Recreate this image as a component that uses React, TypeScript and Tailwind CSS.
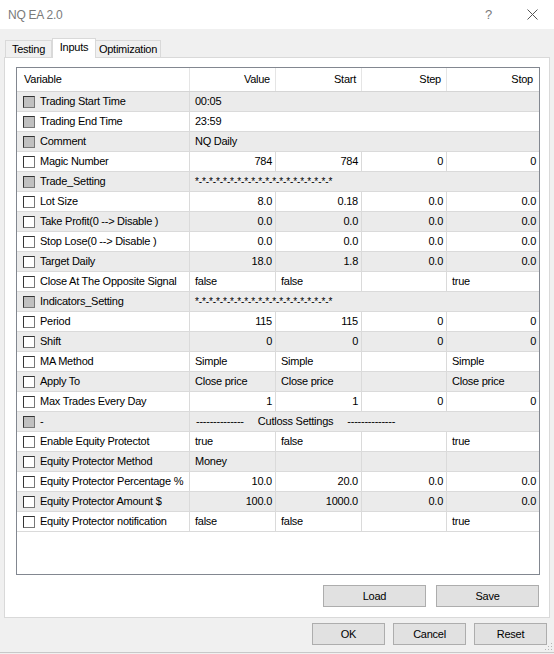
import React from 'react';

type Row = {
  name: string;
  cb: 'gray' | 'white';
  span?: string;
  center?: boolean;
  cells?: string[];
  num?: boolean;
};

const stars = '*-*-*-*-*-*-*-*-*-*-*-*-*-*-*-*-*-*-*-*';

const rows: Row[] = [
  { name: 'Trading Start Time', cb: 'gray', span: '00:05' },
  { name: 'Trading End Time', cb: 'gray', span: '23:59' },
  { name: 'Comment', cb: 'gray', span: 'NQ Daily' },
  { name: 'Magic Number', cb: 'white', cells: ['784', '784', '0', '0'], num: true },
  { name: 'Trade_Setting', cb: 'gray', span: stars },
  { name: 'Lot Size', cb: 'white', cells: ['8.0', '0.18', '0.0', '0.0'], num: true },
  { name: 'Take Profit(0 --> Disable )', cb: 'white', cells: ['0.0', '0.0', '0.0', '0.0'], num: true },
  { name: 'Stop Lose(0 --> Disable )', cb: 'white', cells: ['0.0', '0.0', '0.0', '0.0'], num: true },
  { name: 'Target Daily', cb: 'white', cells: ['18.0', '1.8', '0.0', '0.0'], num: true },
  { name: 'Close At The Opposite Signal', cb: 'white', cells: ['false', 'false', '', 'true'] },
  { name: 'Indicators_Setting', cb: 'gray', span: stars },
  { name: 'Period', cb: 'white', cells: ['115', '115', '0', '0'], num: true },
  { name: 'Shift', cb: 'white', cells: ['0', '0', '0', '0'], num: true },
  { name: 'MA Method', cb: 'white', cells: ['Simple', 'Simple', '', 'Simple'] },
  { name: 'Apply To', cb: 'white', cells: ['Close price', 'Close price', '', 'Close price'] },
  { name: 'Max Trades Every Day', cb: 'white', cells: ['1', '1', '0', '0'], num: true },
  { name: '-', cb: 'gray', span: '--------------     Cutloss Settings     --------------', center: true },
  { name: 'Enable Equity Protectot', cb: 'white', cells: ['true', 'false', '', 'true'] },
  { name: 'Equity Protector Method', cb: 'white', cells: ['Money', '', '', ''] },
  { name: 'Equity Protector Percentage %', cb: 'white', cells: ['10.0', '20.0', '0.0', '0.0'], num: true },
  { name: 'Equity Protector Amount $', cb: 'white', cells: ['100.0', '1000.0', '0.0', '0.0'], num: true },
  { name: 'Equity Protector notification', cb: 'white', cells: ['false', 'false', '', 'true'] },
];

const Check = ({ gray }: { gray: boolean }) => (
  <span
    className={`shrink-0 inline-block w-[12px] h-[12px] border border-t-[#333] border-l-[#333] border-r-[#777] border-b-[#777] ${
      gray ? 'bg-[#c0c0c0]' : 'bg-white'
    }`}
  />
);

const Btn = ({ label, w }: { label: string; w: string }) => (
  <div className={`${w} h-[22px] flex items-center justify-center bg-[#e1e1e1] border border-[#adadad] text-black`}>
    {label}
  </div>
);

export default function App() {
  return (
    <div
      className="w-[554px] h-[654px] bg-[#f0f0f0] text-[11px] tracking-[-0.25px] text-black flex flex-col overflow-hidden relative"
      style={{ fontFamily: '"Liberation Sans", Arial, sans-serif' }}
    >
      {/* title bar */}
      <div className="h-[29px] bg-white flex items-center justify-between pl-[8px] pr-[16px] shrink-0">
        <span className="text-[#7a7a7a] text-[12px]">NQ EA 2.0</span>
        <div className="flex items-center gap-[35px]">
          <span className="text-[#7a7a7a] text-[13px]">?</span>
          <svg width="11" height="11" viewBox="0 0 11 11">
            <path d="M0.5 0.5 L10.5 10.5 M10.5 0.5 L0.5 10.5" stroke="#555" strokeWidth="1" fill="none" />
          </svg>
        </div>
      </div>

      {/* tabs */}
      <div className="flex items-end pl-[5px] pt-[8px] h-[28px] shrink-0 relative z-10">
        <div className="h-[17px] w-[47px] flex items-center justify-center border border-b-0 border-[#d9d9d9] bg-[#f0f0f0]">Testing</div>
        <div className="h-[20px] w-[44px] pb-[3px] flex items-center justify-center border border-b-0 border-[#d9d9d9] bg-white -mb-px">Inputs</div>
        <div className="h-[17px] w-[65px] flex items-center justify-center border border-b-0 border-l-0 border-[#d9d9d9] bg-[#f0f0f0]">Optimization</div>
      </div>

      {/* panel */}
      <div className="mx-[4px] w-[546px] h-[561px] bg-white border border-[#d9d9d9] pt-[9px] pl-[11px] flex flex-col">
        <div className="w-[524px] h-[508px] border border-[#828790] bg-white">
          <div className="grid grid-cols-[173px_86px_86px_85px_92px] h-[24px] border-b border-[#d5d5d5]">
            <div className="flex items-center pl-[7px] border-r border-[#e5e5e5]">Variable</div>
            <div className="flex items-center justify-end pr-[5px] border-r border-[#e5e5e5]">Value</div>
            <div className="flex items-center justify-end pr-[5px] border-r border-[#e5e5e5]">Start</div>
            <div className="flex items-center justify-end pr-[5px] border-r border-[#e5e5e5]">Step</div>
            <div className="flex items-center justify-end pr-[6px]">Stop</div>
          </div>
          {rows.map((r, i) => (
            <div
              key={i}
              className={`grid grid-cols-[173px_86px_86px_85px_92px] h-[20px] border-b border-[#dadada] ${
                i % 2 === 0 ? 'bg-[#ebebeb]' : 'bg-white'
              }`}
            >
              <div className="flex items-center pl-[6px] gap-[5px] border-r border-[#dadada] whitespace-nowrap overflow-hidden">
                <Check gray={r.cb === 'gray'} />
                <span>{r.name}</span>
              </div>
              {r.span !== undefined ? (
                <div className={`col-span-4 flex items-center whitespace-pre ${r.center ? 'pl-[6px]' : 'pl-[5px]'}`}>
                  {r.span === stars ? <span className="text-[10px] tracking-[-0.1px]">{r.span}</span> : r.span}
                </div>
              ) : (
                r.cells!.map((c, j) => (
                  <div
                    key={j}
                    className={`flex items-center whitespace-nowrap ${j < 3 ? 'border-r border-[#dadada]' : ''} ${
                      r.num ? 'justify-end pr-[3px]' : 'pl-[5px]'
                    }`}
                  >
                    {c}
                  </div>
                ))
              )}
            </div>
          ))}
        </div>
        <div className="flex justify-end gap-[10px] pr-[10px] mt-[10px]">
          <Btn label="Load" w="w-[103px]" />
          <Btn label="Save" w="w-[103px]" />
        </div>
      </div>

      {/* footer buttons */}
      <div className="flex justify-end gap-[8px] pr-[7px] mt-[5px]">
        <Btn label="OK" w="w-[73px]" />
        <Btn label="Cancel" w="w-[73px]" />
        <Btn label="Reset" w="w-[73px]" />
      </div>

      <div className="absolute left-0 right-0 bottom-[1px] h-px bg-[#c8c8c8]" />
      <svg className="absolute right-[1px] bottom-[3px]" width="8" height="8" viewBox="0 0 8 8">
        <rect x="6" y="0" width="1" height="1" fill="#b5b5b5" />
        <rect x="3" y="3" width="1" height="1" fill="#b5b5b5" />
        <rect x="6" y="3" width="1" height="1" fill="#b5b5b5" />
        <rect x="0" y="6" width="1" height="1" fill="#b5b5b5" />
        <rect x="3" y="6" width="1" height="1" fill="#b5b5b5" />
        <rect x="6" y="6" width="1" height="1" fill="#b5b5b5" />
      </svg>
    </div>
  );
}
